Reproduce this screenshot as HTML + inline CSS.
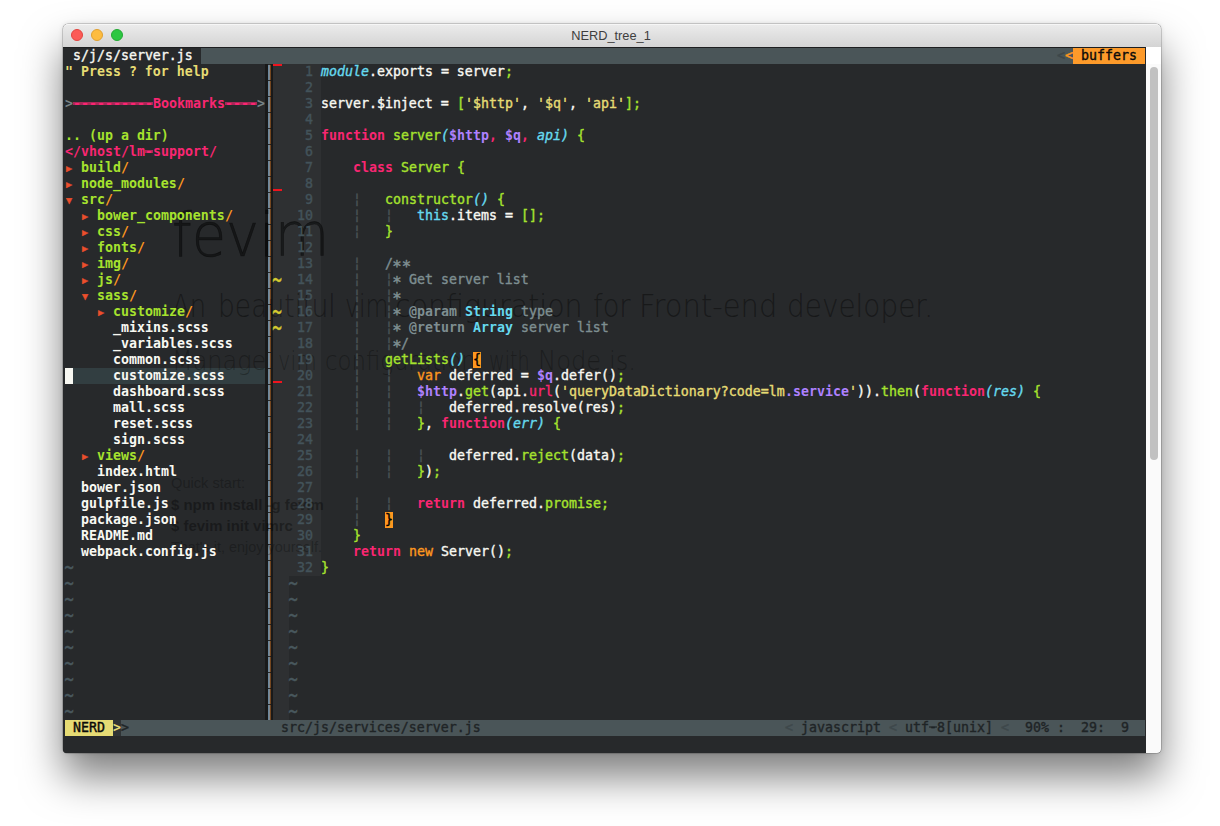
<!DOCTYPE html>
<html lang="en"><head><meta charset="utf-8"><title>NERD_tree_1</title>
<style>
html,body{margin:0;padding:0}
body{width:1220px;height:826px;overflow:hidden;background:#fff;position:relative}
#win{position:absolute;left:63px;top:24px;width:1098px;height:729px;border-radius:5px 5px 4px 4px;
 box-shadow:0 0 0 0.5px rgba(0,0,0,.3),0 24px 40px rgba(0,0,0,.5),0 0 5px rgba(0,0,0,.12);background:#27292b}
#tb{position:absolute;left:0;top:0;width:1098px;height:23px;border-radius:5px 5px 0 0;
 background:linear-gradient(#ececec,#d4d4d4);box-shadow:inset 0 1px 0 #f6f6f6}
#tb i{position:absolute;top:5px;width:12px;height:12px;border-radius:50%;box-sizing:border-box}
#title{position:absolute;left:-1px;width:1098px;top:0;height:23px;text-align:center;
 font:12.8px/24.4px "Liberation Sans",sans-serif;color:#3e3e3e}
#term{position:absolute;left:0;top:23px;width:1083px;height:706px;background:#27292b;overflow:hidden;border-radius:0 0 0 4px}
#sb{position:absolute;left:1083px;top:23px;width:15px;height:706px;background:#fafafa;border-radius:0 0 4px 0}
#sb b{position:absolute;left:0;top:0;width:15px;height:17px;background:#fff}
#sb u{position:absolute;left:4px;top:20px;width:8px;height:393px;border-radius:4px;background:#c1c1c1}
#grid{position:absolute;left:2px;top:1px;width:1080px;height:704px;
 font-family:"DejaVu Sans Mono","Liberation Mono",monospace;font-size:13.288px;color:#f8f8f2;-webkit-text-stroke:.38px}
.bg{position:absolute}
.r{position:absolute;left:0;height:16px;width:1080px;line-height:16px;white-space:pre}
.r span{position:absolute;top:0}
.b{font-weight:bold;-webkit-text-stroke:0}.i{font-style:italic}
.w{color:#f8f8f2}.p{color:#f92672}.g{color:#a6e22e}.y{color:#e6db74}.o{color:#fd971f}
.c{color:#66d9ef}.u{color:#ae81ff}.cm{color:#7e8e91}.k{color:#0a0a0a}
.ln{color:#43535a;-webkit-text-stroke:.4px}.nt{color:#48575d;margin-top:-.9px;transform:scale(1.15,1.6);transform-origin:4px 7.2px}
.hy{background:linear-gradient(rgba(0,0,0,0) 6.5px,rgba(249,38,114,.62) 6.5px,rgba(249,38,114,.62) 8.6px,rgba(0,0,0,0) 8.6px)}
.st.hy{background:linear-gradient(rgba(0,0,0,0) 6.5px,rgba(31,36,38,.6) 6.5px,rgba(31,36,38,.6) 8.2px,rgba(0,0,0,0) 8.2px)}
.as{transform:scale(1.18,1.22);transform-origin:4px 5.5px;margin-top:2.9px}.ig{color:#4a5256}.dim{color:#788386}.dimlt{color:#3d474a}
.ar{color:#ec4f2c;font-size:15px;margin-left:-.5px}.sg{color:#d4cb30;-webkit-text-stroke:.25px;transform:scale(1.2,1.8);transform-origin:4px 7.3px}
.mp{color:#000;background:#fd971f}
.st{color:#1f2426}.sdim{color:#3e484b}.sy{color:#e6db74}
.ghost{position:absolute;color:rgba(0,0,0,.42);-webkit-text-stroke:.35px;white-space:pre;transform-origin:0 0}
</style></head><body>
<div id="win">
<div id="tb"><i style="left:8px;background:#fc5b57;border:.5px solid #e2443f"></i><i style="left:28px;background:#fdbc40;border:.5px solid #e0a030"></i><i style="left:48px;background:#2dc742;border:.5px solid #23a933"></i>
<div id="title">NERD_tree_1</div></div>
<div id="term"><div id="grid">
<div class="bg" style="left:-2px;top:-1px;width:1083px;height:1px;background:#1d1e20;"></div><div class="bg" style="left:0px;top:0px;width:1080px;height:16px;background:#4a5558;"></div><div class="bg" style="left:0px;top:0px;width:136px;height:16px;background:#27292b;"></div><div class="bg" style="left:1008px;top:0px;width:72px;height:16px;background:#fd9a2a;"></div><div class="bg" style="left:200px;top:16px;width:8px;height:656px;background:#191919;"></div><div class="bg" style="left:203px;top:16px;width:3px;height:656px;background:repeating-linear-gradient(rgba(25,25,25,.85) 0,rgba(25,25,25,.85) .9px,rgba(0,0,0,0) 1.5px,rgba(0,0,0,0) 16px),linear-gradient(90deg,#6a879d 0,#6a879d 1px,#84878a 1px,#84878a 2px,#74461f 2px,#74461f 3px);"></div><div class="bg" style="left:208px;top:16px;width:16px;height:656px;background:#2e3032;"></div><div class="bg" style="left:224px;top:16px;width:32px;height:512px;background:#2e3032;"></div><div class="bg" style="left:0px;top:320px;width:200px;height:16px;background:#323e41;"></div><div class="bg" style="left:0px;top:320px;width:8px;height:16px;background:#f8f8f2;"></div><div class="bg" style="left:208px;top:16px;width:9px;height:1.5px;background:#f0141e;"></div><div class="bg" style="left:208px;top:141px;width:9px;height:2px;background:#f0141e;"></div><div class="bg" style="left:208px;top:333px;width:9px;height:2px;background:#f0141e;"></div><div class="bg" style="left:0px;top:672px;width:1080px;height:16px;background:#4a5558;"></div><div class="bg" style="left:0px;top:672px;width:48px;height:16px;background:#e6db74;"></div><div class="bg" style="left:48px;top:672px;width:8px;height:16px;background:#2f3335;"></div>
<div class="ghost" style="left:107.30px;top:150.59px;font-size:61px;line-height:71.00px;font-family:'DejaVu Sans Light','DejaVu Sans',sans-serif;font-weight:200;transform:scaleX(0.9168);color:rgba(0,0,0,0.46);-webkit-text-stroke:0.65px">fevim</div><div class="ghost" style="left:106.70px;top:239.80px;font-size:32px;line-height:37.25px;font-family:'DejaVu Sans Light','DejaVu Sans',sans-serif;font-weight:200;transform:scaleX(0.8086);color:rgba(0,0,0,0.38);-webkit-text-stroke:0.12px">An</div><div class="ghost" style="left:153.20px;top:239.80px;font-size:32px;line-height:37.25px;font-family:'DejaVu Sans Light','DejaVu Sans',sans-serif;font-weight:200;transform:scaleX(0.8295);color:rgba(0,0,0,0.38);-webkit-text-stroke:0.12px">beautiful</div><div class="ghost" style="left:280.40px;top:239.80px;font-size:32px;line-height:37.25px;font-family:'DejaVu Sans Light','DejaVu Sans',sans-serif;font-weight:200;transform:scaleX(0.7356);color:rgba(0,0,0,0.38);-webkit-text-stroke:0.12px">vim</div><div class="ghost" style="left:330.20px;top:239.80px;font-size:32px;line-height:37.25px;font-family:'DejaVu Sans Light','DejaVu Sans',sans-serif;font-weight:200;transform:scaleX(0.8884);color:rgba(0,0,0,0.38);-webkit-text-stroke:0.12px">configuration</div><div class="ghost" style="left:528.20px;top:239.80px;font-size:32px;line-height:37.25px;font-family:'DejaVu Sans Light','DejaVu Sans',sans-serif;font-weight:200;transform:scaleX(0.8545);color:rgba(0,0,0,0.38);-webkit-text-stroke:0.12px">for</div><div class="ghost" style="left:574.20px;top:239.80px;font-size:32px;line-height:37.25px;font-family:'DejaVu Sans Light','DejaVu Sans',sans-serif;font-weight:200;transform:scaleX(0.9053);color:rgba(0,0,0,0.38);-webkit-text-stroke:0.12px">Front-end</div><div class="ghost" style="left:721.70px;top:239.80px;font-size:32px;line-height:37.25px;font-family:'DejaVu Sans Light','DejaVu Sans',sans-serif;font-weight:200;transform:scaleX(0.8723);color:rgba(0,0,0,0.38);-webkit-text-stroke:0.12px">developer.</div><div class="ghost" style="left:107.20px;top:298.41px;font-size:26.5px;line-height:30.85px;font-family:'DejaVu Sans Light','DejaVu Sans',sans-serif;font-weight:200;transform:scaleX(0.9037);color:rgba(0,0,0,0.29);-webkit-text-stroke:0.08px">Manage</div><div class="ghost" style="left:213.10px;top:298.41px;font-size:26.5px;line-height:30.85px;font-family:'DejaVu Sans Light','DejaVu Sans',sans-serif;font-weight:200;transform:scaleX(0.7921);color:rgba(0,0,0,0.29);-webkit-text-stroke:0.08px">vim</div><div class="ghost" style="left:260.20px;top:298.41px;font-size:26.5px;line-height:30.85px;font-family:'DejaVu Sans Light','DejaVu Sans',sans-serif;font-weight:200;transform:scaleX(0.8612);color:rgba(0,0,0,0.29);-webkit-text-stroke:0.08px">configuration</div><div class="ghost" style="left:424.20px;top:298.41px;font-size:26.5px;line-height:30.85px;font-family:'DejaVu Sans Light','DejaVu Sans',sans-serif;font-weight:200;transform:scaleX(0.7221);color:rgba(0,0,0,0.29);-webkit-text-stroke:0.08px">with</div><div class="ghost" style="left:473.20px;top:298.41px;font-size:26.5px;line-height:30.85px;font-family:'DejaVu Sans Light','DejaVu Sans',sans-serif;font-weight:200;transform:scaleX(0.9144);color:rgba(0,0,0,0.29);-webkit-text-stroke:0.08px">Node.js.</div><div class="ghost" style="left:105.50px;top:425.41px;font-size:14.4px;line-height:20.00px;font-family:'Liberation Sans',sans-serif;font-weight:400;transform:scaleX(1.0163);-webkit-text-stroke:0;color:rgba(0,0,0,.27)">Quick start:</div><div class="ghost" style="left:105.50px;top:447.01px;font-size:14.4px;line-height:20.00px;font-family:'Liberation Sans',sans-serif;font-weight:700;transform:scaleX(1.0392);-webkit-text-stroke:0;color:rgba(0,0,0,.36)">$ npm install -g fevim</div><div class="ghost" style="left:105.50px;top:468.01px;font-size:14.4px;line-height:20.00px;font-family:'Liberation Sans',sans-serif;font-weight:700;transform:scaleX(1.0370);-webkit-text-stroke:0;color:rgba(0,0,0,.36)">$ fevim init vimrc</div><div class="ghost" style="left:106.00px;top:488.61px;font-size:14.4px;line-height:20.00px;font-family:'Liberation Sans',sans-serif;font-weight:400;transform:scaleX(1.0012);-webkit-text-stroke:0;color:rgba(0,0,0,.27)">That's it, enjoy yourself.</div>
<div class="r" style="top:0px"><span class="w" style="left:8px">s/j/s/server.js</span><span class="dimlt" style="left:992px">&lt;</span><span class="o" style="left:1000px">&lt;</span><span class="k" style="left:1016px">buffers</span></div>
<div class="r" style="top:16px"><span class="y b" style="left:0px">" Press ? for help</span><span class="ln" style="left:240px">1</span><span class="c i" style="left:256px">module</span><span class="w" style="left:304px">.exports = server</span><span class="g" style="left:440px">;</span></div>
<div class="r" style="top:32px"><span class="ln" style="left:240px">2</span></div>
<div class="r" style="top:48px"><span class="dim b" style="left:0px">&gt;</span><span class="p b hy" style="left:8px">----------</span><span class="p b" style="left:88px">Bookmarks</span><span class="p b hy" style="left:160px">----</span><span class="dim b" style="left:192px">&gt;</span><span class="ln" style="left:240px">3</span><span class="w" style="left:256px">server.$inject = </span><span class="g" style="left:392px">[</span><span class="y" style="left:400px">'$http'</span><span class="w" style="left:456px">, </span><span class="y" style="left:472px">'$q'</span><span class="w" style="left:504px">, </span><span class="y" style="left:520px">'api'</span><span class="g" style="left:560px">]</span><span class="g" style="left:568px">;</span></div>
<div class="r" style="top:64px"><span class="ln" style="left:240px">4</span></div>
<div class="r" style="top:80px"><span class="g b" style="left:0px">.. (up a dir)</span><span class="ln" style="left:240px">5</span><span class="p b" style="left:256px">function</span><span class="g" style="left:328px">server</span><span class="c i" style="left:376px">(</span><span class="u b" style="left:384px">$http</span><span class="p b" style="left:424px">,</span><span class="u b" style="left:440px">$q</span><span class="p b" style="left:456px">,</span><span class="c i" style="left:472px">api</span><span class="c i" style="left:496px">)</span><span class="g" style="left:512px">{</span></div>
<div class="r" style="top:96px"><span class="p b" style="left:0px">&lt;/vhost/lm</span><span class="p b hy" style="left:80px">-</span><span class="p b" style="left:88px">support/</span><span class="ln" style="left:240px">6</span></div>
<div class="r" style="top:112px"><span class="ar" style="left:0px">▸</span><span class="g b" style="left:16px">build</span><span class="o b" style="left:56px">/</span><span class="ln" style="left:240px">7</span><span class="p b" style="left:288px">class</span><span class="g" style="left:336px">Server</span><span class="g" style="left:392px">{</span></div>
<div class="r" style="top:128px"><span class="ar" style="left:0px">▸</span><span class="g b" style="left:16px">node_modules</span><span class="o b" style="left:112px">/</span><span class="ln" style="left:240px">8</span></div>
<div class="r" style="top:144px"><span class="ar" style="left:0px">▾</span><span class="g b" style="left:16px">src</span><span class="o b" style="left:40px">/</span><span class="ln" style="left:240px">9</span><span class="ig" style="left:288px">¦</span><span class="g" style="left:320px">constructor</span><span class="c i" style="left:408px">()</span><span class="g" style="left:432px">{</span></div>
<div class="r" style="top:160px"><span class="ar" style="left:16px">▸</span><span class="g b" style="left:32px">bower_components</span><span class="o b" style="left:160px">/</span><span class="ln" style="left:232px">10</span><span class="ig" style="left:288px">¦</span><span class="ig" style="left:320px">¦</span><span class="c" style="left:352px">this</span><span class="w" style="left:384px">.items = </span><span class="g" style="left:456px">[]</span><span class="g" style="left:472px">;</span></div>
<div class="r" style="top:176px"><span class="ar" style="left:16px">▸</span><span class="g b" style="left:32px">css</span><span class="o b" style="left:56px">/</span><span class="ln" style="left:232px">11</span><span class="ig" style="left:288px">¦</span><span class="g" style="left:320px">}</span></div>
<div class="r" style="top:192px"><span class="ar" style="left:16px">▸</span><span class="g b" style="left:32px">fonts</span><span class="o b" style="left:72px">/</span><span class="ln" style="left:232px">12</span></div>
<div class="r" style="top:208px"><span class="ar" style="left:16px">▸</span><span class="g b" style="left:32px">img</span><span class="o b" style="left:56px">/</span><span class="ln" style="left:232px">13</span><span class="ig" style="left:288px">¦</span><span class="cm" style="left:320px">/</span><span class="cm as" style="left:328px">**</span></div>
<div class="r" style="top:224px"><span class="ar" style="left:16px">▸</span><span class="g b" style="left:32px">js</span><span class="o b" style="left:48px">/</span><span class="ln" style="left:232px">14</span><span class="ig" style="left:288px">¦</span><span class="ig" style="left:320px">¦</span><span class="cm as" style="left:328px">*</span><span class="cm" style="left:336px"> Get server list</span><span class="sg" style="left:208px">~</span></div>
<div class="r" style="top:240px"><span class="ar" style="left:16px">▾</span><span class="g b" style="left:32px">sass</span><span class="o b" style="left:64px">/</span><span class="ln" style="left:232px">15</span><span class="ig" style="left:288px">¦</span><span class="ig" style="left:320px">¦</span><span class="cm as" style="left:328px">*</span></div>
<div class="r" style="top:256px"><span class="ar" style="left:32px">▸</span><span class="g b" style="left:48px">customize</span><span class="o b" style="left:120px">/</span><span class="ln" style="left:232px">16</span><span class="ig" style="left:288px">¦</span><span class="ig" style="left:320px">¦</span><span class="cm as" style="left:328px">*</span><span class="cm b" style="left:344px">@param</span><span class="c b" style="left:400px">String</span><span class="cm" style="left:448px"> type</span><span class="sg" style="left:208px">~</span></div>
<div class="r" style="top:272px"><span class="w b" style="left:48px">_mixins.scss</span><span class="ln" style="left:232px">17</span><span class="ig" style="left:288px">¦</span><span class="ig" style="left:320px">¦</span><span class="cm as" style="left:328px">*</span><span class="cm b" style="left:344px">@return</span><span class="c b" style="left:408px">Array</span><span class="cm" style="left:448px"> server list</span><span class="sg" style="left:208px">~</span></div>
<div class="r" style="top:288px"><span class="w b" style="left:48px">_variables.scss</span><span class="ln" style="left:232px">18</span><span class="ig" style="left:288px">¦</span><span class="ig" style="left:320px">¦</span><span class="cm as" style="left:328px">*</span><span class="cm" style="left:336px">/</span></div>
<div class="r" style="top:304px"><span class="w b" style="left:48px">common.scss</span><span class="ln" style="left:232px">19</span><span class="ig" style="left:288px">¦</span><span class="g" style="left:320px">getLists</span><span class="c i" style="left:384px">()</span><span class="mp" style="left:408px">{</span></div>
<div class="r" style="top:320px"><span class="w b" style="left:48px">customize.scss</span><span class="ln" style="left:232px">20</span><span class="ig" style="left:288px">¦</span><span class="ig" style="left:320px">¦</span><span class="o" style="left:352px">var</span><span class="w" style="left:376px"> deferred = </span><span class="u b" style="left:472px">$q</span><span class="w" style="left:488px">.defer()</span><span class="g" style="left:552px">;</span></div>
<div class="r" style="top:336px"><span class="w b" style="left:48px">dashboard.scss</span><span class="ln" style="left:232px">21</span><span class="ig" style="left:288px">¦</span><span class="ig" style="left:320px">¦</span><span class="u b" style="left:352px">$http</span><span class="w" style="left:392px">.</span><span class="g" style="left:400px">get</span><span class="w" style="left:424px">(api.</span><span class="p" style="left:464px">url</span><span class="w" style="left:488px">(</span><span class="y" style="left:496px">'queryDataDictionary?code=lm</span><span class="u b" style="left:720px">.service</span><span class="y" style="left:784px">'</span><span class="w" style="left:792px">)).</span><span class="g" style="left:816px">then</span><span class="w" style="left:848px">(</span><span class="p b" style="left:856px">function</span><span class="c i" style="left:920px">(res)</span><span class="g" style="left:968px">{</span></div>
<div class="r" style="top:352px"><span class="w b" style="left:48px">mall.scss</span><span class="ln" style="left:232px">22</span><span class="ig" style="left:288px">¦</span><span class="ig" style="left:320px">¦</span><span class="ig" style="left:352px">¦</span><span class="w" style="left:384px">deferred.resolve(res)</span><span class="g" style="left:552px">;</span></div>
<div class="r" style="top:368px"><span class="w b" style="left:48px">reset.scss</span><span class="ln" style="left:232px">23</span><span class="ig" style="left:288px">¦</span><span class="ig" style="left:320px">¦</span><span class="g" style="left:352px">}</span><span class="w" style="left:360px">, </span><span class="p b" style="left:376px">function</span><span class="c i" style="left:440px">(err)</span><span class="g" style="left:488px">{</span></div>
<div class="r" style="top:384px"><span class="w b" style="left:48px">sign.scss</span><span class="ln" style="left:232px">24</span></div>
<div class="r" style="top:400px"><span class="ar" style="left:16px">▸</span><span class="g b" style="left:32px">views</span><span class="o b" style="left:72px">/</span><span class="ln" style="left:232px">25</span><span class="ig" style="left:288px">¦</span><span class="ig" style="left:320px">¦</span><span class="ig" style="left:352px">¦</span><span class="w" style="left:384px">deferred.</span><span class="g" style="left:456px">reject</span><span class="w" style="left:504px">(data)</span><span class="g" style="left:552px">;</span></div>
<div class="r" style="top:416px"><span class="w b" style="left:32px">index.html</span><span class="ln" style="left:232px">26</span><span class="ig" style="left:288px">¦</span><span class="ig" style="left:320px">¦</span><span class="g" style="left:352px">}</span><span class="w" style="left:360px">)</span><span class="g" style="left:368px">;</span></div>
<div class="r" style="top:432px"><span class="w b" style="left:16px">bower.json</span><span class="ln" style="left:232px">27</span></div>
<div class="r" style="top:448px"><span class="w b" style="left:16px">gulpfile.js</span><span class="ln" style="left:232px">28</span><span class="ig" style="left:288px">¦</span><span class="ig" style="left:320px">¦</span><span class="p b" style="left:352px">return</span><span class="w" style="left:400px"> deferred.</span><span class="g" style="left:480px">promise</span><span class="g" style="left:536px">;</span></div>
<div class="r" style="top:464px"><span class="w b" style="left:16px">package.json</span><span class="ln" style="left:232px">29</span><span class="ig" style="left:288px">¦</span><span class="mp" style="left:320px">}</span></div>
<div class="r" style="top:480px"><span class="w b" style="left:16px">README.md</span><span class="ln" style="left:232px">30</span><span class="g" style="left:288px">}</span></div>
<div class="r" style="top:496px"><span class="w b" style="left:16px">webpack.config.js</span><span class="ln" style="left:232px">31</span><span class="p b" style="left:288px">return</span><span class="o" style="left:344px">new</span><span class="w" style="left:368px"> Server()</span><span class="g" style="left:440px">;</span></div>
<div class="r" style="top:512px"><span class="nt" style="left:0px">~</span><span class="ln" style="left:232px">32</span><span class="g" style="left:256px">}</span></div>
<div class="r" style="top:528px"><span class="nt" style="left:0px">~</span><span class="nt" style="left:224px">~</span></div>
<div class="r" style="top:544px"><span class="nt" style="left:0px">~</span><span class="nt" style="left:224px">~</span></div>
<div class="r" style="top:560px"><span class="nt" style="left:0px">~</span><span class="nt" style="left:224px">~</span></div>
<div class="r" style="top:576px"><span class="nt" style="left:0px">~</span><span class="nt" style="left:224px">~</span></div>
<div class="r" style="top:592px"><span class="nt" style="left:0px">~</span><span class="nt" style="left:224px">~</span></div>
<div class="r" style="top:608px"><span class="nt" style="left:0px">~</span><span class="nt" style="left:224px">~</span></div>
<div class="r" style="top:624px"><span class="nt" style="left:0px">~</span><span class="nt" style="left:224px">~</span></div>
<div class="r" style="top:640px"><span class="nt" style="left:0px">~</span><span class="nt" style="left:224px">~</span></div>
<div class="r" style="top:656px"><span class="nt" style="left:0px">~</span><span class="nt" style="left:224px">~</span></div>
<div class="r" style="top:672px"><span class="k" style="left:8px">NERD</span><span class="sy b" style="left:48px">&gt;</span><span class="st" style="left:56px">&gt;</span><span class="st" style="left:216px">src/js/services/server.js</span><span class="sdim" style="left:720px">&lt;</span><span class="st" style="left:736px">javascript</span><span class="sdim" style="left:824px">&lt;</span><span class="st" style="left:840px">utf</span><span class="st hy" style="left:864px">-</span><span class="st" style="left:872px">8[unix]</span><span class="sdim" style="left:936px">&lt;</span><span class="st" style="left:960px">90%</span><span class="st" style="left:992px">:</span><span class="st" style="left:1016px">29:</span><span class="st" style="left:1056px">9</span></div>
</div></div>
<div id="sb"><b></b><u></u></div>
</div>
</body></html>
